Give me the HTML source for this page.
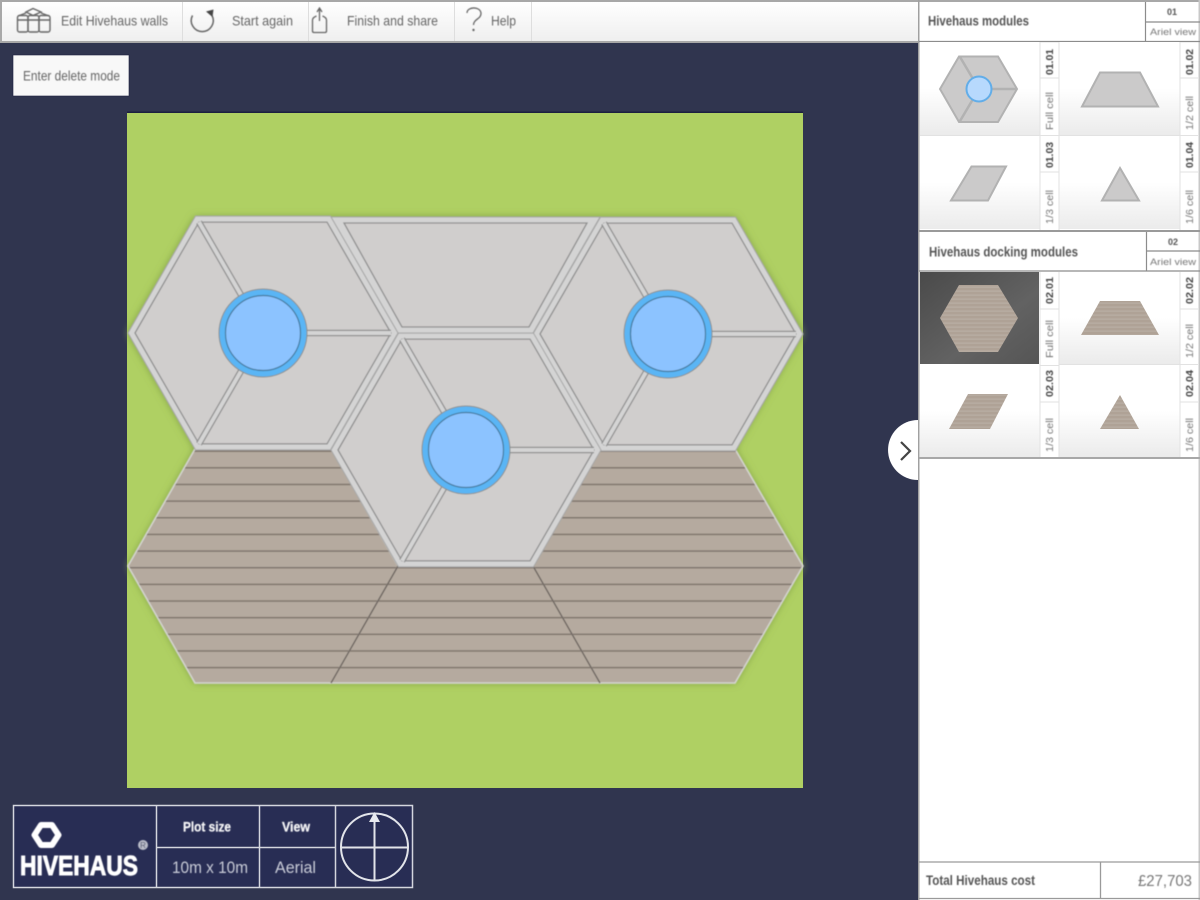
<!DOCTYPE html>
<html><head><meta charset="utf-8"><title>Hivehaus</title>
<style>
html,body{margin:0;padding:0;width:1200px;height:900px;overflow:hidden;background:#30354f}
svg{display:block}
text{font-family:"Liberation Sans",sans-serif}
</style></head><body>
<svg width="1200" height="900" viewBox="0 0 1200 900" xmlns="http://www.w3.org/2000/svg">
<defs>
<linearGradient id="bar" x1="0" y1="0" x2="0" y2="1"><stop offset="0" stop-color="#fff"/><stop offset="1" stop-color="#efefef"/></linearGradient>
<linearGradient id="cell" x1="0" y1="0" x2="0" y2="1"><stop offset=".5" stop-color="#fff"/><stop offset="1" stop-color="#ebebeb"/></linearGradient>
<linearGradient id="sel" x1="0" y1="0" x2="1" y2="1"><stop offset="0" stop-color="#4a4a4a"/><stop offset=".6" stop-color="#626262"/><stop offset="1" stop-color="#555"/></linearGradient>
<pattern id="deck" patternUnits="userSpaceOnUse" x="0" y="451.9" width="20" height="16.65"><rect width="20" height="16.65" fill="#b5aa9f"/><rect y="15.2" width="20" height="1.6" fill="#7d736b"/></pattern>
<pattern id="tdeck" patternUnits="userSpaceOnUse" width="10" height="4"><rect width="10" height="4" fill="#afa296"/><rect y="2.6" width="10" height="1" fill="#bcb1a7"/></pattern>
<filter id="s1" x="-10%" y="-10%" width="120%" height="120%"><feGaussianBlur stdDeviation="4"/></filter>
<filter id="b" x="-5%" y="-5%" width="110%" height="110%"><feGaussianBlur stdDeviation=".45"/></filter>
<filter id="b2" x="-5%" y="-5%" width="110%" height="110%"><feGaussianBlur stdDeviation=".4"/></filter>
<g id="hex">
<polygon points="-135,0 -67.5,-116.9 67.5,-116.9 135,0 67.5,116.9 -67.5,116.9" fill="#d4d4d4" stroke="#a6a6a6"/>
<polygon points="-128,0 -64,-110.9 64,-110.9 128,0 64,110.9 -64,110.9" fill="#d0cecd" stroke="#8f8f8f" stroke-width="1.300"/>
<path d="M0 0L-64 -110.9M0 0L-64 110.9M0 0L128 0" stroke="#8f8f8f" stroke-width="6.500"/>
<path d="M0 0L-64 -110.9M0 0L-64 110.9M0 0L128 0" stroke="#d4d4d4" stroke-width="4"/>
<circle r="44" fill="#5ab5f5" stroke="#8a8f8c"/>
<circle r="37.500" fill="#8cc3ff" stroke="#47799d" stroke-width="1.200"/>
</g>
</defs>

<rect width="1200" height="900" fill="#30354f"/>

<!-- plot -->
<rect x="127" y="113" width="676" height="675" fill="#afd063"/>
<rect x="127" y="111.500" width="676" height="1.500" fill="#1c2040"/>
<g filter="url(#b2)">
<polygon points="195,217 735,217 803,333 735,449 803,566 735,683 195,683 128,566 195,449 128,333" fill="#7f9d42" filter="url(#s1)"/>
<!-- decking -->
<polygon points="195,449 331,449 398,566 331,683 195,683 128,566" fill="url(#deck)" stroke="#d4d4d0" stroke-width="1.500"/>
<polygon points="600,449 735,449 803,566 735,683 600,683 533,566" fill="url(#deck)" stroke="#d4d4d0" stroke-width="1.500"/>
<polygon points="398,566 533,566 600,683 331,683" fill="url(#deck)" stroke="#d4d4d0" stroke-width="1.500"/>
<path d="M398 566L331 683M533 566L600 683" stroke="#6e655e" stroke-width="1.500"/>
<!-- top middle half cell -->
<polygon points="331,217 600,217 533,333 398,333" fill="#d4d4d4" stroke="#a6a6a6"/>
<polygon points="344,223 587,223 529,327 402,327" fill="#d0cecd" stroke="#8f8f8f" stroke-width="1.300"/>
<use href="#hex" transform="translate(263,333)"/>
<use href="#hex" transform="translate(668,334)"/>
<use href="#hex" transform="translate(466,450)"/>
</g>

<!-- top toolbar -->
<rect x="0" y="0" width="918" height="43" fill="#a8a8a8"/>
<rect x="2" y="2" width="916" height="39" fill="url(#bar)"/>
<path d="M182.500 2V41M308.500 2V41M454.500 2V41M531.500 2V41" stroke="#dedede"/>

<g filter="url(#b)">
<!-- edit walls icon -->
<g fill="none" stroke="#666" stroke-width="1.400">
<path d="M26 12L33 8.500L41 12L33 15.500Z"/>
<path d="M18 16L26 13M49 16L41 13"/>
<rect x="17.500" y="15.500" width="10.500" height="16.500" rx="2"/>
<rect x="28" y="15.500" width="11" height="16.500" rx="2"/>
<rect x="39" y="15.500" width="11" height="16.500" rx="2"/>
<path d="M17.500 20H50"/>
</g>
<!-- start again icon -->
<path d="M192.500 15.500A11 11 0 1 0 212 15.500" fill="none" stroke="#666" stroke-width="1.500"/>
<path d="M206 11.500L213.500 9.500L212.500 17Z" fill="#444"/>
<!-- share icon -->
<path d="M316.500 16C314 17 312.500 18 312.500 20V31C312.500 32 313 32.500 314 32.500H325C326 32.500 326.500 32 326.500 31V20C326.500 18 325 17 322.500 16" fill="none" stroke="#666" stroke-width="1.300"/>
<path d="M319.500 21V9M317 12L319.500 8L322 12" fill="none" stroke="#666" stroke-width="1.300"/>
<!-- help icon -->
<path d="M467 13C467 6.500 480 6 481 13C481.500 19 473.500 19 473.500 25" fill="none" stroke="#666" stroke-width="1.300"/>
<circle cx="473.500" cy="30" r="1.200" fill="#666"/>

<g fill="#666" font-size="14">
<text x="61" y="25.500" textLength="107" lengthAdjust="spacingAndGlyphs">Edit Hivehaus walls</text>
<text x="232" y="25.500" textLength="61" lengthAdjust="spacingAndGlyphs">Start again</text>
<text x="347" y="25.500" textLength="91" lengthAdjust="spacingAndGlyphs">Finish and share</text>
<text x="491" y="25.500" textLength="25" lengthAdjust="spacingAndGlyphs">Help</text>
</g>
</g>

<!-- delete button -->
<rect x="13" y="55" width="116" height="41" fill="#f8f8f8" stroke="#1d2140" stroke-width=".6"/>
<text x="23" y="80.500" font-size="14" fill="#666" textLength="97" lengthAdjust="spacingAndGlyphs" filter="url(#b)">Enter delete mode</text>

<!-- right panel -->
<rect x="918" y="0" width="282" height="900" fill="#fff"/>
<rect x="918" y="0" width="282" height="2" fill="#a8a8a8"/>
<rect x="918" y="0" width="1.500" height="900" fill="#a0a0a0"/>
<rect x="1198.500" y="0" width="1.500" height="900" fill="#c8c8c8"/>

<!-- modules header -->
<path d="M919 41.500H1200M1145.500 2V41M1146 22H1200" stroke="#8c8c8c" stroke-width="1.200" fill="none"/>
<!-- module cells -->
<rect x="920" y="42" width="120" height="93" fill="url(#cell)"/>
<rect x="1059" y="42" width="121" height="93" fill="url(#cell)"/>
<rect x="920" y="136" width="120" height="93" fill="url(#cell)"/>
<rect x="1059" y="136" width="121" height="93" fill="url(#cell)"/>
<path d="M920 135.500H1198M1040 42V230M1059 42V230M1180 42V230M1040 78H1059M1180 78H1198M1040 172H1059M1180 172H1198" stroke="#e2e2e2" fill="none"/>
<path d="M919 231H1200" stroke="#9a9a9a" stroke-width="2"/>

<!-- module thumbs -->
<polygon points="940,89 959,56.500 998,56.500 1017,89 998,122 959,122" fill="#cbcaca" stroke="#b2b2b2" stroke-width="2"/>
<path d="M979 89L960 57M979 89L960 121M979 89H1017" stroke="#b2b2b2" stroke-width="2.500"/>
<circle cx="979" cy="89" r="12.500" fill="#b7d9fd" stroke="#62ade8" stroke-width="2"/>
<polygon points="1100,72.500 1140,72.500 1158,106.500 1082,106.500" fill="#cbcaca" stroke="#b2b2b2" stroke-width="2"/>
<polygon points="971.500,166.500 1006,166.500 988,200.500 951,200.500" fill="#cbcaca" stroke="#b2b2b2" stroke-width="2"/>
<polygon points="1120,168 1139,200.500 1102,200.500" fill="#cbcaca" stroke="#b2b2b2" stroke-width="2"/>

<!-- docking header -->
<path d="M919 271H1200M1146.500 232V271M1147 251H1200" stroke="#8c8c8c" stroke-width="1.200" fill="none"/>
<!-- docking cells -->
<rect x="920" y="272" width="119" height="92" fill="url(#sel)"/>
<rect x="1059" y="272" width="121" height="92" fill="url(#cell)"/>
<rect x="920" y="365" width="120" height="92" fill="url(#cell)"/>
<rect x="1059" y="365" width="121" height="92" fill="url(#cell)"/>
<path d="M1040 365.500H1059M1059 364.500H1198M1040 272V458M1059 272V458M1180 272V458M1040 309H1059M1180 309H1198M1040 402H1059M1180 402H1198" stroke="#e2e2e2" fill="none"/>
<path d="M919 458H1200" stroke="#a8a8a8" stroke-width="2"/>
<!-- docking thumbs -->
<polygon points="940,318 959,285 998,285 1018,318 998,352 959,352" fill="url(#tdeck)"/>
<polygon points="1100,301 1140,301 1159,335 1081,335" fill="url(#tdeck)"/>
<polygon points="968,394 1008,394 990,429 949,429" fill="url(#tdeck)"/>
<polygon points="1120,395 1139,429 1100,429" fill="url(#tdeck)"/>

<!-- panel text -->
<g filter="url(#b)">
<text x="928" y="25.500" font-size="14" font-weight="bold" fill="#555" textLength="101" lengthAdjust="spacingAndGlyphs">Hivehaus modules</text>
<text x="1172" y="15" font-size="9" font-weight="bold" fill="#555" text-anchor="middle">01</text>
<text x="1150" y="35" font-size="9" fill="#777" textLength="46" lengthAdjust="spacingAndGlyphs">Ariel view</text>
<text x="929" y="256.500" font-size="14" font-weight="bold" fill="#555" textLength="149" lengthAdjust="spacingAndGlyphs">Hivehaus docking modules</text>
<text x="1173" y="245" font-size="9" font-weight="bold" fill="#555" text-anchor="middle">02</text>
<text x="1150" y="265" font-size="9" fill="#777" textLength="46" lengthAdjust="spacingAndGlyphs">Ariel view</text>

<g font-size="10" font-weight="bold" fill="#444">
<text transform="translate(1053,75) rotate(-90)" textLength="26" lengthAdjust="spacingAndGlyphs">01.01</text>
<text transform="translate(1193,75) rotate(-90)" textLength="26" lengthAdjust="spacingAndGlyphs">01.02</text>
<text transform="translate(1053,168) rotate(-90)" textLength="26" lengthAdjust="spacingAndGlyphs">01.03</text>
<text transform="translate(1193,168) rotate(-90)" textLength="26" lengthAdjust="spacingAndGlyphs">01.04</text>
<text transform="translate(1053,304) rotate(-90)" textLength="27" lengthAdjust="spacingAndGlyphs">02.01</text>
<text transform="translate(1193,304) rotate(-90)" textLength="27" lengthAdjust="spacingAndGlyphs">02.02</text>
<text transform="translate(1053,397) rotate(-90)" textLength="27" lengthAdjust="spacingAndGlyphs">02.03</text>
<text transform="translate(1193,397) rotate(-90)" textLength="27" lengthAdjust="spacingAndGlyphs">02.04</text>
</g>
<g font-size="10" fill="#777">
<text transform="translate(1053,130) rotate(-90)" textLength="38" lengthAdjust="spacingAndGlyphs">Full cell</text>
<text transform="translate(1193,130) rotate(-90)" textLength="34" lengthAdjust="spacingAndGlyphs">1/2 cell</text>
<text transform="translate(1053,224) rotate(-90)" textLength="34" lengthAdjust="spacingAndGlyphs">1/3 cell</text>
<text transform="translate(1193,224) rotate(-90)" textLength="34" lengthAdjust="spacingAndGlyphs">1/6 cell</text>
<text transform="translate(1053,358) rotate(-90)" textLength="38" lengthAdjust="spacingAndGlyphs">Full cell</text>
<text transform="translate(1193,358) rotate(-90)" textLength="34" lengthAdjust="spacingAndGlyphs">1/2 cell</text>
<text transform="translate(1053,452) rotate(-90)" textLength="34" lengthAdjust="spacingAndGlyphs">1/3 cell</text>
<text transform="translate(1193,452) rotate(-90)" textLength="34" lengthAdjust="spacingAndGlyphs">1/6 cell</text>
</g>
</g>

<!-- total row -->
<path d="M919 862H1200M1100.500 862V898M919 898.500H1200" stroke="#9a9a9a" stroke-width="1.300" fill="none"/>
<text x="926" y="885" font-size="14" font-weight="bold" fill="#555" textLength="109" lengthAdjust="spacingAndGlyphs" filter="url(#b)">Total Hivehaus cost</text>
<text x="1138" y="886" font-size="16" fill="#777" textLength="54" lengthAdjust="spacingAndGlyphs" filter="url(#b)">£27,703</text>

<!-- collapse tab -->
<path d="M918 420A30 30 0 0 0 918 480Z" fill="#fff"/>
<path d="M901 442L910 451L901 460" fill="none" stroke="#444" stroke-width="2.200"/>

<!-- info box -->
<rect x="13.500" y="805.500" width="399" height="82" fill="#282d54" stroke="#d4d6de" stroke-width="1.500"/>
<path d="M156.500 806V887M259.500 806V887M335.500 806V887M157 847.500H335" stroke="#d4d6de" stroke-width="1.500" fill="none"/>
<g filter="url(#b)">
<polygon points="34.500,835 41,825 52,825 58.500,835 52,845 41,845" fill="none" stroke="#fff" stroke-width="6" stroke-linejoin="round"/>
<text x="20" y="875" font-size="28" font-weight="bold" fill="#fff" stroke="#fff" stroke-width=".9" textLength="118" lengthAdjust="spacingAndGlyphs">HIVEHAUS</text>
<circle cx="143" cy="845" r="5" fill="#b9bcc8"/>
<text x="143" y="848" font-size="8" fill="#4a4f6a" text-anchor="middle">R</text>
<text x="183" y="831.500" font-size="14" font-weight="bold" fill="#f4f4f6" stroke="#f4f4f6" stroke-width=".3" textLength="48" lengthAdjust="spacingAndGlyphs">Plot size</text>
<text x="282" y="831.500" font-size="14" font-weight="bold" fill="#f4f4f6" stroke="#f4f4f6" stroke-width=".3" textLength="28" lengthAdjust="spacingAndGlyphs">View</text>
<text x="172" y="873" font-size="17" fill="#c9ccd8" textLength="76" lengthAdjust="spacingAndGlyphs">10m x 10m</text>
<text x="275" y="873" font-size="17" fill="#c9ccd8" textLength="41" lengthAdjust="spacingAndGlyphs">Aerial</text>
</g>
<circle cx="374.500" cy="847" r="33.500" fill="none" stroke="#e2e4ea" stroke-width="2"/>
<path d="M341 847.500H408M374.500 818V880" stroke="#e2e4ea" stroke-width="2" fill="none"/>
<path d="M374.500 812L369 822H380Z" fill="#e8eaf0"/>
</svg>
</body></html>
